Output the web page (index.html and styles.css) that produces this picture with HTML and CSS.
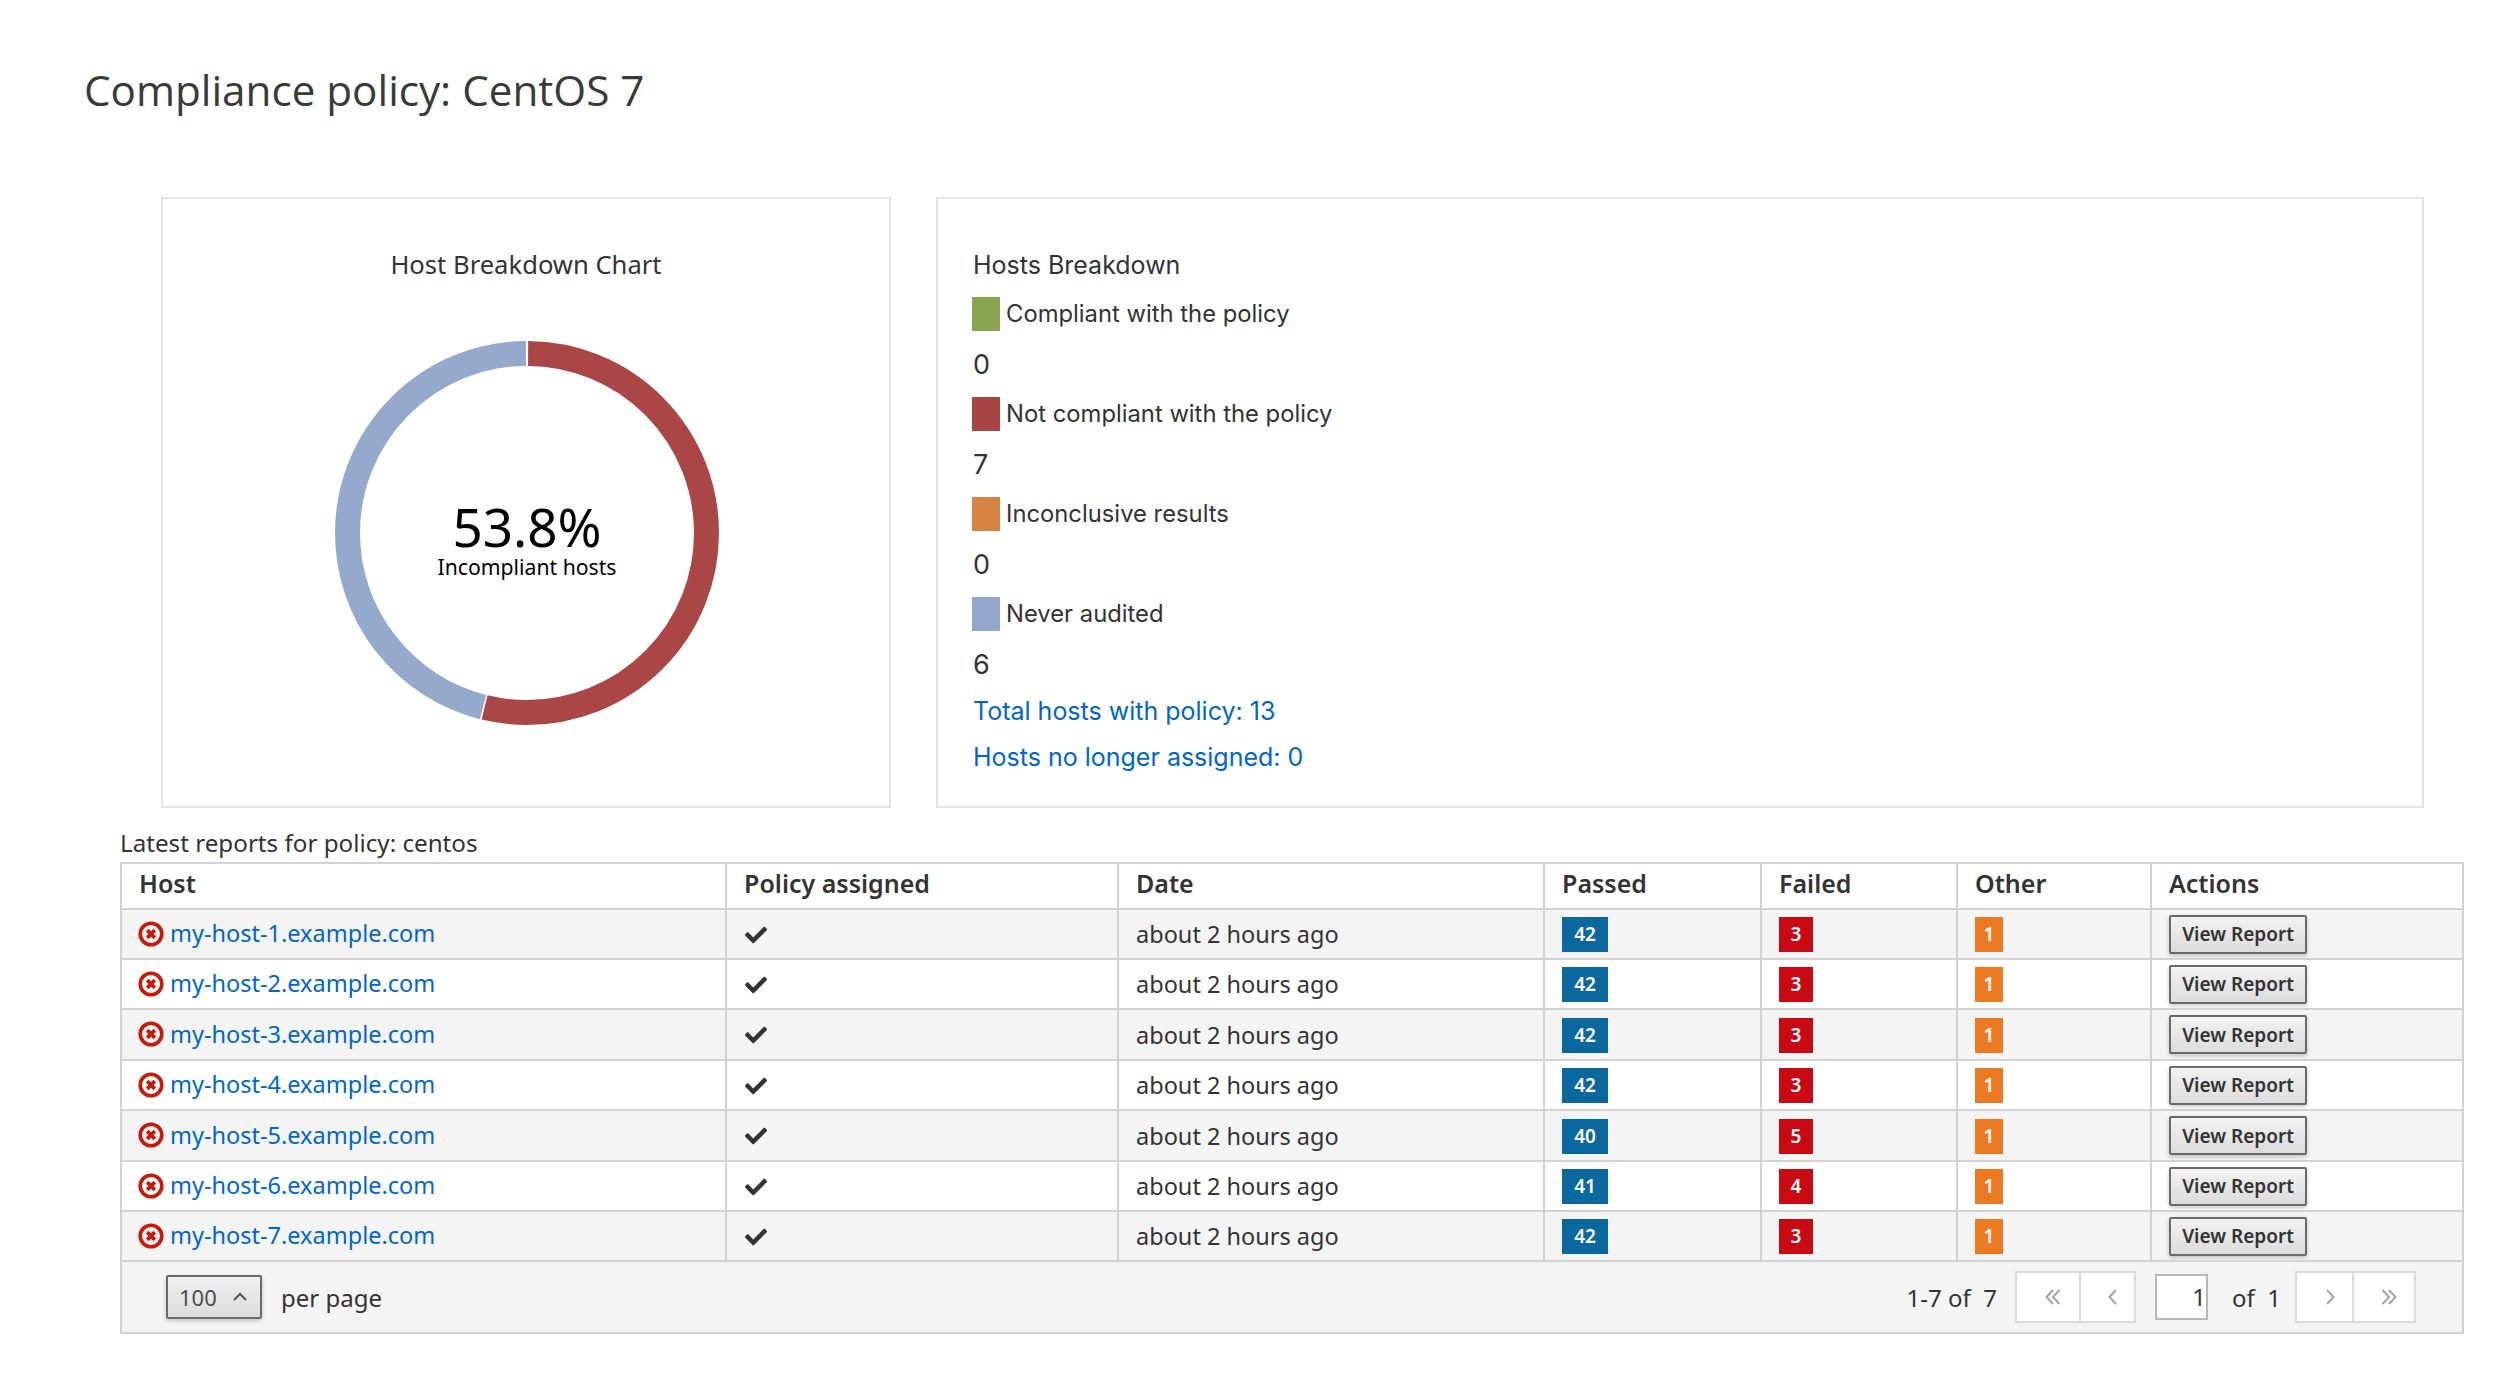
FILE: index.html
```html
<!DOCTYPE html>
<html lang="en">

<head>
    <meta charset="UTF-8">
    <title>Compliance policy: CentOS 7</title>
    <link rel="stylesheet" href="styles.css">
</head>

<body>

    <svg class="icon-defs" width="0" height="0">
        <symbol id="icon-error" viewBox="0 0 26 26">
            <circle cx="13" cy="13" r="10.8" fill="none" stroke="currentColor" stroke-width="3.6" />
            <path d="M9.2 9.2l7.6 7.6M16.8 9.2l-7.6 7.6" fill="none" stroke="currentColor" stroke-width="3.8" />
        </symbol>
        <symbol id="icon-check" viewBox="0 0 512 512">
            <path fill="currentColor" d="M173.898 439.404l-166.4-166.4c-9.997-9.997-9.997-26.206 0-36.204l36.203-36.204c9.997-9.998 26.207-9.998 36.204 0L192 312.69 432.095 72.596c9.997-9.997 26.207-9.997 36.204 0l36.203 36.204c9.997 9.997 9.997 26.206 0 36.204l-294.4 294.401c-9.998 9.997-26.207 9.997-36.204-.001z" />
        </symbol>
    </svg>

    <h1 class="page-title">Compliance policy: CentOS 7</h1>

    <div class="cards">
        <section class="card chart-card">
            <h2 class="chart-title">Host Breakdown Chart</h2>
            <svg class="donut" width="384" height="384" viewBox="0 0 384 384">
                <g transform="rotate(-90 192 192)">
                    <circle class="slice-red" cx="192" cy="192" r="179.5" pathLength="100" stroke-dasharray="53.7 46.3" stroke-dashoffset="-0.1" />
                    <circle class="slice-blue" cx="192" cy="192" r="179.5" pathLength="100" stroke-dasharray="45.95 54.05" stroke-dashoffset="-53.95" />
                </g>
                <text class="donut-value" x="192" y="206" text-anchor="middle">53.8%</text>
                <text class="donut-label" x="192" y="234" text-anchor="middle">Incompliant hosts</text>
            </svg>
        </section>

        <section class="card breakdown-card">
            <h2 class="breakdown-title">Hosts Breakdown</h2>
            <div class="legend-row"><span class="swatch swatch-green"></span>Compliant with the policy</div>
            <div class="legend-value">0</div>
            <div class="legend-row"><span class="swatch swatch-red"></span>Not compliant with the policy</div>
            <div class="legend-value">7</div>
            <div class="legend-row"><span class="swatch swatch-orange"></span>Inconclusive results</div>
            <div class="legend-value">0</div>
            <div class="legend-row"><span class="swatch swatch-blue"></span>Never audited</div>
            <div class="legend-value">6</div>
            <a class="summary-link" href="#">Total hosts with policy: 13</a>
            <a class="summary-link" href="#">Hosts no longer assigned: 0</a>
        </section>
    </div>

    <div class="reports">
        <div class="reports-caption">Latest reports for policy: centos</div>
        <table class="reports-table">
            <colgroup>
                <col class="col-host">
                <col class="col-policy">
                <col class="col-date">
                <col class="col-passed">
                <col class="col-failed">
                <col class="col-other">
                <col class="col-actions">
            </colgroup>
            <thead>
                <tr>
                    <th>Host</th>
                    <th>Policy assigned</th>
                    <th>Date</th>
                    <th>Passed</th>
                    <th>Failed</th>
                    <th>Other</th>
                    <th>Actions</th>
                </tr>
            </thead>
            <tbody>
                <tr>
                    <td><svg class="icon-error"><use href="#icon-error" /></svg><a href="#">my-host-1.example.com</a></td>
                    <td><svg class="icon-check"><use href="#icon-check" /></svg></td>
                    <td>about 2 hours ago</td>
                    <td><span class="badge badge-passed">42</span></td>
                    <td><span class="badge badge-failed">3</span></td>
                    <td><span class="badge badge-other">1</span></td>
                    <td><button class="view-btn" type="button">View Report</button></td>
                </tr>
                <tr>
                    <td><svg class="icon-error"><use href="#icon-error" /></svg><a href="#">my-host-2.example.com</a></td>
                    <td><svg class="icon-check"><use href="#icon-check" /></svg></td>
                    <td>about 2 hours ago</td>
                    <td><span class="badge badge-passed">42</span></td>
                    <td><span class="badge badge-failed">3</span></td>
                    <td><span class="badge badge-other">1</span></td>
                    <td><button class="view-btn" type="button">View Report</button></td>
                </tr>
                <tr>
                    <td><svg class="icon-error"><use href="#icon-error" /></svg><a href="#">my-host-3.example.com</a></td>
                    <td><svg class="icon-check"><use href="#icon-check" /></svg></td>
                    <td>about 2 hours ago</td>
                    <td><span class="badge badge-passed">42</span></td>
                    <td><span class="badge badge-failed">3</span></td>
                    <td><span class="badge badge-other">1</span></td>
                    <td><button class="view-btn" type="button">View Report</button></td>
                </tr>
                <tr>
                    <td><svg class="icon-error"><use href="#icon-error" /></svg><a href="#">my-host-4.example.com</a></td>
                    <td><svg class="icon-check"><use href="#icon-check" /></svg></td>
                    <td>about 2 hours ago</td>
                    <td><span class="badge badge-passed">42</span></td>
                    <td><span class="badge badge-failed">3</span></td>
                    <td><span class="badge badge-other">1</span></td>
                    <td><button class="view-btn" type="button">View Report</button></td>
                </tr>
                <tr>
                    <td><svg class="icon-error"><use href="#icon-error" /></svg><a href="#">my-host-5.example.com</a></td>
                    <td><svg class="icon-check"><use href="#icon-check" /></svg></td>
                    <td>about 2 hours ago</td>
                    <td><span class="badge badge-passed">40</span></td>
                    <td><span class="badge badge-failed">5</span></td>
                    <td><span class="badge badge-other">1</span></td>
                    <td><button class="view-btn" type="button">View Report</button></td>
                </tr>
                <tr>
                    <td><svg class="icon-error"><use href="#icon-error" /></svg><a href="#">my-host-6.example.com</a></td>
                    <td><svg class="icon-check"><use href="#icon-check" /></svg></td>
                    <td>about 2 hours ago</td>
                    <td><span class="badge badge-passed">41</span></td>
                    <td><span class="badge badge-failed">4</span></td>
                    <td><span class="badge badge-other">1</span></td>
                    <td><button class="view-btn" type="button">View Report</button></td>
                </tr>
                <tr>
                    <td><svg class="icon-error"><use href="#icon-error" /></svg><a href="#">my-host-7.example.com</a></td>
                    <td><svg class="icon-check"><use href="#icon-check" /></svg></td>
                    <td>about 2 hours ago</td>
                    <td><span class="badge badge-passed">42</span></td>
                    <td><span class="badge badge-failed">3</span></td>
                    <td><span class="badge badge-other">1</span></td>
                    <td><button class="view-btn" type="button">View Report</button></td>
                </tr>
            </tbody>
        </table>

        <div class="table-footer">
            <div class="per-page">
                <div class="per-page-select">100
                    <svg width="16" height="10" viewBox="0 0 16 10"><path d="M2 8l6-6 6 6" fill="none" stroke="#555" stroke-width="2" /></svg>
                </div>
                <span>per page</span>
            </div>
            <div class="pager">
                <span class="pager-count">1-7 of&nbsp; 7</span>
                <div class="pager-group">
                    <span class="pager-btn pager-btn-wide"><svg width="16" height="16" viewBox="0 0 16 16"><path d="M8 1L1.500 8 8 15M14.500 1L8 8l6.500 7" /></svg></span>
                    <span class="pager-btn"><svg width="10" height="16" viewBox="0 0 10 16"><path d="M8 1L1.500 8 8 15" /></svg></span>
                </div>
                <div class="pager-input">1</div>
                <span class="pager-of">of&nbsp; 1</span>
                <div class="pager-group">
                    <span class="pager-btn"><svg width="10" height="16" viewBox="0 0 10 16"><path d="M2 1l6.500 7L2 15" /></svg></span>
                    <span class="pager-btn pager-btn-wide"><svg width="16" height="16" viewBox="0 0 16 16"><path d="M1.500 1L8 8l-6.500 7M8 1l6.500 7L8 15" /></svg></span>
                </div>
            </div>
        </div>
    </div>

</body>

</html>
```

FILE: styles.css
```css
body {
    margin: 0;
    font-family: "Noto Sans", sans-serif;
    color: #333;
    background-color: #fff;
}

a {
    color: #0066cc;
    text-decoration: none;
}

.icon-defs {
    display: block;
    height: 0;
}

.page-title {
    margin: 0;
    padding: 59px 0 0 84px;
    height: 137px;
    box-sizing: border-box;
    font-family: "Open Sans", sans-serif;
    font-size: 42.2px;
    line-height: 62px;
    font-weight: 400;
    color: #3a3a3a;
}

.cards {
    display: flex;
    gap: 45px;
    margin: 60px 96px 0 161px;
    height: 611px;
}

.card {
    box-sizing: border-box;
    border: 2px solid #e4e4e4;
}

.chart-card {
    width: 730px;
    display: flex;
    flex-direction: column;
    align-items: center;
}

.chart-title {
    margin: 46px 0 0;
    font-size: 25.6px;
    line-height: 40px;
    font-weight: 400;
}

.donut {
    margin: 56px 0 0 2px;
}

.donut circle {
    fill: none;
    stroke-width: 25;
}

.slice-red {
    stroke: #aa4646;
}

.slice-blue {
    stroke: #94a9cc;
}

.donut-value {
    font-family: "Noto Sans", sans-serif;
    font-size: 53px;
    fill: #000;
}

.donut-label {
    font-family: "Noto Sans", sans-serif;
    font-size: 21.2px;
    fill: #000;
}

.breakdown-card {
    flex: 1;
    padding: 46px 0 0 34px;
    font-family: "Inter", sans-serif;
    font-size: 25px;
}

.breakdown-title {
    margin: 0 0 0 1px;
    font-size: 25px;
    line-height: 40px;
    font-weight: 400;
}

.legend-row {
    display: flex;
    align-items: center;
    margin-top: 12px;
    height: 34px;
    font-size: 23.8px;
    line-height: 30px;
}

.swatch {
    width: 28px;
    height: 34px;
    margin-right: 6px;
}

.swatch-green {
    background-color: #8aa550;
}

.swatch-red {
    background-color: #a84545;
}

.swatch-orange {
    background-color: #d78344;
}

.swatch-blue {
    background-color: #92a7cb;
}

.legend-value {
    height: 66px;
    box-sizing: border-box;
    padding: 14px 0 0 1px;
    font-size: 27px;
    line-height: 40px;
    margin-bottom: -12px;
}

.summary-link {
    display: block;
    margin: 6px 0 0 1px;
    height: 40px;
    line-height: 40px;
}

.reports {
    margin: 0 56px 0 120px;
}

.reports-caption {
    height: 54px;
    box-sizing: border-box;
    padding-top: 15px;
    font-size: 24.2px;
    line-height: 40px;
}

.reports-table {
    width: 100%;
    table-layout: fixed;
    border-collapse: collapse;
    font-size: 23.5px;
}

.col-host {
    width: 605px;
}

.col-policy {
    width: 392px;
}

.col-date {
    width: 426px;
}

.col-passed {
    width: 217px;
}

.col-failed {
    width: 196px;
}

.col-other {
    width: 194px;
}

.reports-table th,
.reports-table td {
    border: 2px solid #d2d2d2;
    padding: 0 16px 0 17px;
    text-align: left;
    vertical-align: middle;
}

.reports-table th {
    height: 38px;
    padding-bottom: 6px;
    font-size: 25px;
    font-weight: 600;
}

.reports-table td {
    height: 48px;
}

.reports-table tbody tr:nth-child(odd) {
    background-color: #f4f4f4;
}

.reports-table tbody tr:nth-child(3) td,
.reports-table tbody tr:nth-child(5) td {
    height: 49px;
}

.icon-error {
    width: 26px;
    height: 26px;
    margin: 0 6px 4px -1px;
    color: #c9190b;
    vertical-align: middle;
}

.icon-check {
    width: 22px;
    height: 22px;
    margin: 0 0 4px 1px;
    color: #333;
    vertical-align: middle;
}

.badge {
    display: inline-block;
    min-width: 28px;
    padding: 0 3px;
    box-sizing: border-box;
    height: 35px;
    line-height: 35px;
    font-size: 19px;
    font-weight: 600;
    text-align: center;
    color: #fff;
    vertical-align: middle;
}

.badge-passed {
    width: 46px;
    background-color: #0b689f;
}

.badge-failed {
    width: 34px;
    background-color: #c90a13;
}

.badge-other {
    width: 28px;
    background-color: #ec7a23;
}

.view-btn {
    display: block;
    width: 138px;
    height: 39px;
    padding: 0;
    font-family: "Noto Sans", sans-serif;
    font-size: 19px;
    font-weight: 600;
    color: #333;
    background: linear-gradient(#f2f2f2, #dcdcdc);
    border: 2px solid #6a6a6a;
    border-radius: 2px;
    box-shadow: 0 2px 4px rgba(0, 0, 0, 0.2);
    cursor: pointer;
}

.table-footer {
    display: flex;
    justify-content: space-between;
    align-items: center;
    box-sizing: border-box;
    height: 72px;
    margin-top: 0;
    padding: 0 46px 0 44px;
    background-color: #f4f4f4;
    border: 2px solid #d2d2d2;
    border-top: none;
    font-size: 24px;
}

.per-page {
    display: flex;
    align-items: center;
    gap: 19px;
}

.per-page-select {
    display: flex;
    align-items: center;
    justify-content: space-between;
    box-sizing: border-box;
    width: 96px;
    height: 44px;
    padding: 0 12px 0 11px;
    font-size: 22px;
    color: #4d4d4d;
    background: linear-gradient(#f0f0f0, #dcdcdc);
    border: 2px solid #6a6a6a;
    border-radius: 2px;
    box-shadow: 0 2px 4px rgba(0, 0, 0, 0.2);
}

.pager {
    display: flex;
    align-items: center;
}

.pager-count {
    margin-right: 18px;
}

.pager-group {
    display: flex;
    height: 52px;
    box-sizing: border-box;
    background-color: #fff;
    border: 2px solid #dcdcdc;
}

.pager-btn {
    display: flex;
    align-items: center;
    justify-content: center;
    box-sizing: border-box;
    width: 55px;
    padding-left: 10px;
}

.pager-btn-wide {
    width: 62px;
}

.pager-btn + .pager-btn {
    border-left: 2px solid #dcdcdc;
}

.pager-btn svg {
    fill: none;
    stroke: #a3a3a3;
    stroke-width: 2;
}

.pager-input {
    box-sizing: border-box;
    width: 53px;
    height: 46px;
    margin: 0 24px 0 19px;
    text-align: right;
    line-height: 42px;
    background-color: #fff;
    border: 2px solid #b8b8b8;
}

.pager-of {
    margin-right: 14px;
}
```
